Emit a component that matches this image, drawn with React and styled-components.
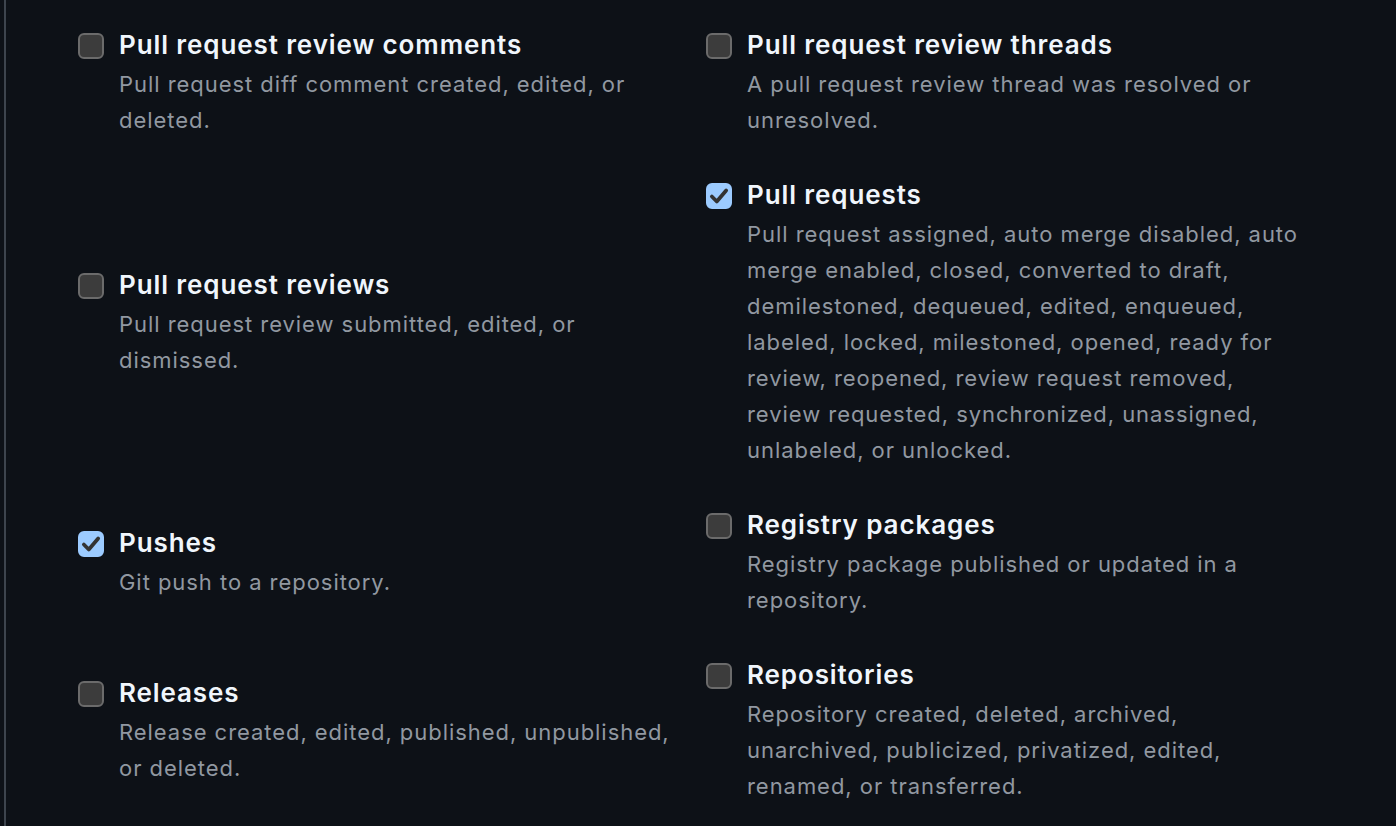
import React from 'react'
import styled, { createGlobalStyle } from 'styled-components'

const GlobalStyle = createGlobalStyle`
  html, body {
    margin: 0;
    padding: 0;
    background: #0d1117;
  }
  body {
    font-family: Inter, "Noto Sans", "Liberation Sans", sans-serif;
  }
`

const Page = styled.div`
  min-height: 826px;
  padding-left: 4px;
  box-sizing: border-box;
`

const Panel = styled.div`
  min-height: 826px;
  border-left: 2px solid #3d444d;
  padding: 27px 0 0 72px;
  box-sizing: border-box;
`

const Grid = styled.div`
  display: grid;
  grid-template-columns: 592px 592px;
  column-gap: 36px;
  row-gap: 39px;
  align-items: center;
`

const Item = styled.label`
  display: flex;
  align-items: flex-start;
  gap: 15px;
`

const Box = styled.span`
  flex: none;
  width: 26px;
  height: 26px;
  margin-top: 6px;
  box-sizing: border-box;
  border-radius: 6px;
  display: flex;
  align-items: center;
  justify-content: center;
  background: ${p => (p.checked ? '#9ccbff' : '#3c3c3c')};
  border: 2px solid ${p => (p.checked ? '#9ccbff' : '#6b6b6b')};
`

const Text = styled.div`
  display: flex;
  flex-direction: column;
  gap: 3px;
  width: 552px;
`

const Title = styled.div`
  color: #f0f6fc;
  font-size: 26px;
  font-weight: 600;
  line-height: 36px;
  letter-spacing: 0.9px;
`

const Desc = styled.div`
  color: #9198a1;
  font-size: 22px;
  line-height: 36px;
  letter-spacing: 0.95px;
`

const Check = () => (
  <svg width="22" height="22" viewBox="0 0 20 20">
    <path d="M3.5 10.5 L8 15 L16.5 5" fill="none" stroke="#333333" strokeWidth="3.4" strokeLinecap="round" strokeLinejoin="round" />
  </svg>
)

const events = [
  { title: 'Pull request review comments', desc: 'Pull request diff comment created, edited, or deleted.' },
  { title: 'Pull request review threads', desc: 'A pull request review thread was resolved or unresolved.' },
  { title: 'Pull request reviews', desc: 'Pull request review submitted, edited, or dismissed.' },
  {
    title: 'Pull requests',
    checked: true,
    desc: 'Pull request assigned, auto merge disabled, auto merge enabled, closed, converted to draft, demilestoned, dequeued, edited, enqueued, labeled, locked, milestoned, opened, ready for review, reopened, review request removed, review requested, synchronized, unassigned, unlabeled, or unlocked.',
  },
  { title: 'Pushes', checked: true, desc: 'Git push to a repository.' },
  { title: 'Registry packages', desc: 'Registry package published or updated in a repository.' },
  { title: 'Releases', desc: 'Release created, edited, published, unpublished, or deleted.' },
  { title: 'Repositories', desc: 'Repository created, deleted, archived, unarchived, publicized, privatized, edited, renamed, or transferred.' },
]

const App = () => {
  return (
    <Page>
      <GlobalStyle />
      <Panel>
        <Grid>
          {events.map(e => (
            <Item key={e.title}>
              <Box checked={e.checked}>{e.checked && <Check />}</Box>
              <Text>
                <Title>{e.title}</Title>
                <Desc>{e.desc}</Desc>
              </Text>
            </Item>
          ))}
        </Grid>
      </Panel>
    </Page>
  )
}

export default App
